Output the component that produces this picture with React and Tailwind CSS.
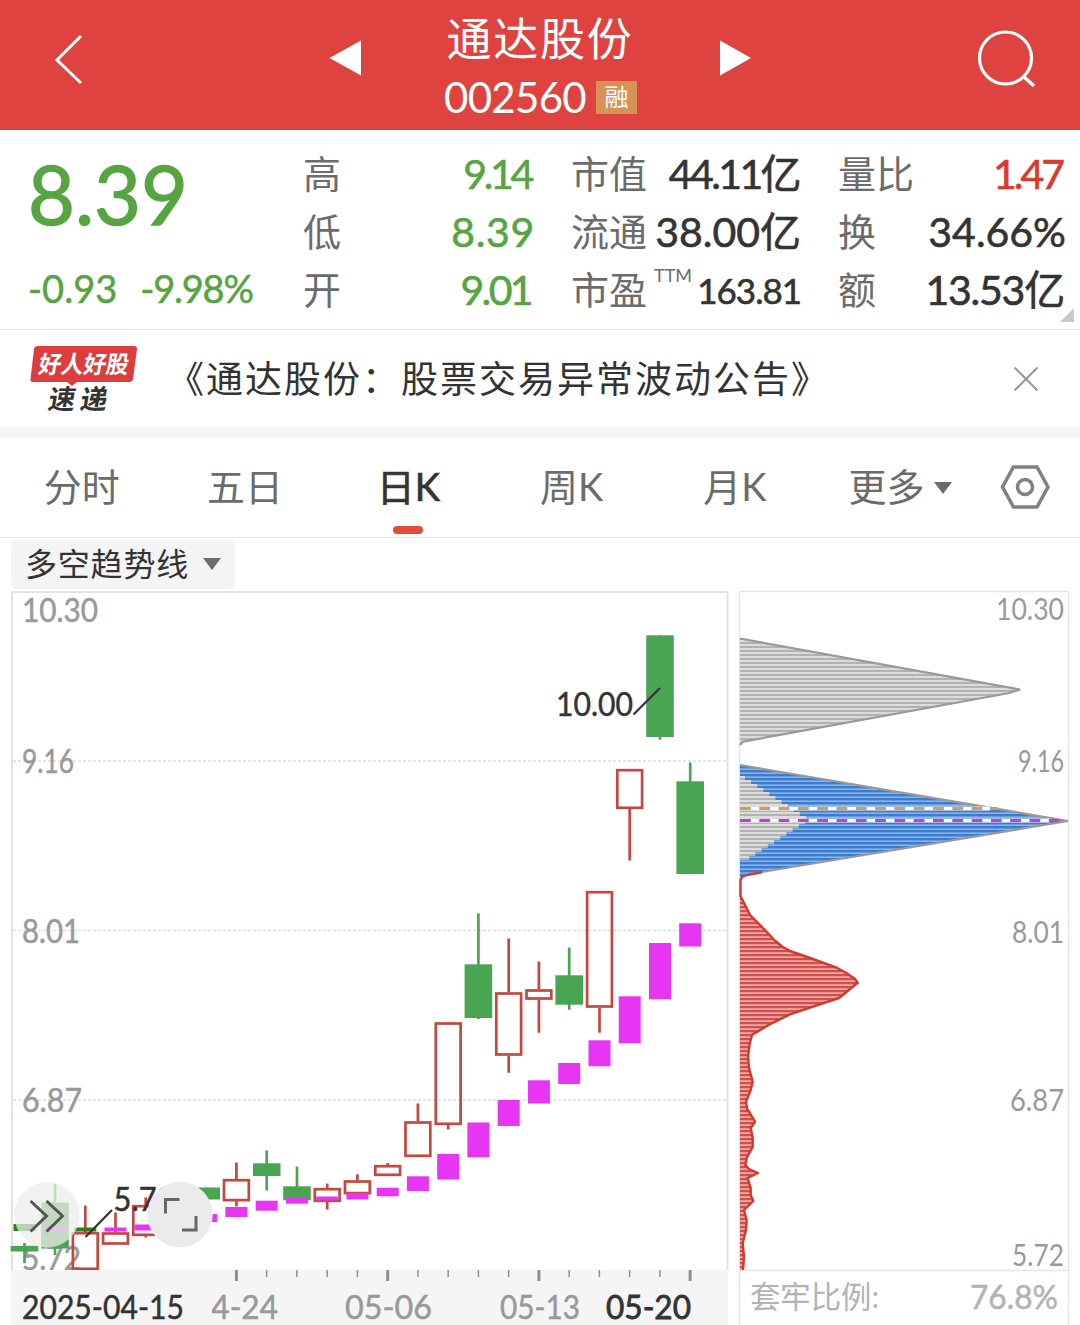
import { Fragment } from 'react';
import clsx from 'clsx';

const UP = '#c5473f';
const DOWN = '#4aa552';
const TREND = '#e835f3';
const TREND_DOWN = '#2f7d1c';

// x, body top, body bottom, wick top, wick bottom, direction
const candles = [
  [24.5, 1246, 1251.5, 1243, 1263, 'down'],
  [55, 1202.5, 1248.5, 1184, 1255, 'down'],
  [85.3, 1232, 1270, 1205.5, 1270, 'up'],
  [115.5, 1232.3, 1244.7, 1212.5, 1244.7, 'up'],
  [145.7, 1205, 1236, 1197.5, 1237.5, 'up'],
  [206.2, 1187.5, 1199.5, 1187.5, 1199.5, 'down'],
  [236.4, 1179, 1201.3, 1162.5, 1206.5, 'up'],
  [266.7, 1163.3, 1176, 1150.5, 1190.5, 'down'],
  [297, 1186.3, 1200.3, 1166.5, 1200.3, 'down'],
  [327.2, 1188, 1202, 1183.5, 1209.5, 'up'],
  [357.4, 1180.3, 1194.3, 1174.3, 1194.3, 'up'],
  [387.7, 1165, 1176, 1163, 1176, 'up'],
  [417.9, 1121.3, 1157, 1103.5, 1157, 'up'],
  [448.2, 1022.3, 1125, 1022.3, 1129.5, 'up'],
  [478.4, 964.3, 1018, 913.3, 1019, 'down'],
  [508.7, 992.3, 1055.7, 938.5, 1072.7, 'up'],
  [538.9, 989.3, 999.7, 961.5, 1032.7, 'up'],
  [569.2, 975.3, 1004.7, 947.5, 1009.7, 'down'],
  [599.5, 891, 1007.7, 891, 1032.7, 'up'],
  [629.7, 769, 809, 769, 860.5, 'up'],
  [660, 635.3, 737, 635.3, 739.7, 'down'],
  [690.2, 781.3, 874, 762.5, 874, 'down'],
];

// x, top, bottom
const trend = [
  [24.5, 1224, 1231, true],
  [55, 1227.5, 1231],
  [85.3, 1227.5, 1231.5, true],
  [115.5, 1227.5, 1231.5],
  [145.7, 1224.5, 1230.5],
  [206.2, 1214, 1222],
  [236.4, 1207, 1217],
  [266.7, 1200.7, 1210.7],
  [297, 1197.3, 1203.7],
  [327.2, 1196.5, 1200.5],
  [357.4, 1193, 1199.5],
  [387.7, 1187.7, 1196.3],
  [417.9, 1176.3, 1191],
  [448.2, 1154, 1179.5],
  [478.4, 1122.5, 1157.3],
  [508.7, 1100, 1126],
  [538.9, 1080.3, 1103.5],
  [569.2, 1063, 1084],
  [599.5, 1040.3, 1066.3],
  [629.7, 996.3, 1043.3],
  [660, 943, 999.3],
  [690.2, 923.3, 946.5],
];

const ticks = Array.from({ length: 16 }, (_, i) => 236.4 + i * 30.25);

const costLine = [
  [762, 872.3], [747, 875], [742, 877], [740.5, 880], [740.5, 896], [745, 905], [750, 915], [763, 928], [775, 940.7], [782, 946.5], [790, 951],
  [810, 958], [836.7, 967.7], [846, 972.7], [855, 979], [857.7, 982.7], [839, 998], [813, 1006.7], [790, 1014.3],
  [771.7, 1023.3], [752, 1034.7], [749.5, 1045], [748, 1056.7], [749, 1068], [752.7, 1081.7], [750.7, 1090],
  [746, 1101.7], [747, 1108.3], [755, 1121.7], [750.7, 1128], [752.7, 1138], [752.7, 1147], [746.7, 1157.7],
  [745.3, 1165], [749, 1169], [758, 1173], [747.5, 1178], [750.7, 1188], [750.7, 1195], [753.3, 1201], [744, 1210],
  [746.7, 1220], [746, 1230], [742.7, 1243], [744, 1257], [743, 1270],
].map((p) => p.join(',')).join(' ');

// stepped inner bars of the middle peak
const steps = [
  ...Array.from({ length: 11 }, (_, i) => [776 + i * 4, 5 + i * 6.1]),
  ...Array.from({ length: 10 }, (_, i) => [820 + i * 4, 65 - i * 6.2]),
];

const quotes = [
  [['高', '9.14', 'tracking-[-3.300px] mr-[3px] text-[#56a541]'], ['市值', '44.11亿', 'tracking-[-2.600px] mr-[2px]'], ['量比', '1.47', 'tracking-[-3px] mr-[3px] text-[#d93a2b]']],
  [['低', '8.39', 'tracking-[0.700px] mr-[-1px] text-[#56a541]'], ['流通', '38.00亿', ''], ['换', '34.66%', 'mr-[-1px]']],
  [['开', '9.01', 'tracking-[-2.600px] mr-[3px] text-[#56a541]'], ['市盈', '163.81', 'text-[35px] tracking-[-1px]'], ['额', '13.53亿', 'tracking-[-1.200px] mr-px']],
];

const tabs = ['分时', '五日', '日K', '周K', '月K'];

function Label({ x, y, w, size = 33, fill = '#999999', bold = 0.5, end = false, children }) {
  return (
    <text x={x} y={y} textLength={w} lengthAdjust="spacingAndGlyphs" fontSize={size} fill={fill} stroke={fill} strokeWidth={bold} textAnchor={end ? 'end' : 'start'}>
      {children}
    </text>
  );
}

function Header() {
  return (
    <header className="flex h-[130px] items-start justify-between bg-[#de4340] text-white">
      <svg className="ml-[50px] mt-[30px] h-[60px] w-[40px]" viewBox="50 30 40 60" fill="none" stroke="currentColor" strokeWidth="3">
        <path d="M81 36 57 60 81 83" />
      </svg>
      <div className="ml-[20px] flex items-start">
        <svg className="mt-[40px] h-[36px] w-[32px]" viewBox="329 40 32 36" fill="currentColor">
          <path d="M329.500 58 361 40.500V75.500Z" />
        </svg>
        <div className="flex w-[359px] flex-col items-center">
          <div className="mt-[7px] h-[64px] text-[45px] leading-[64px] tracking-[1.800px]">通达股份</div>
          <div className="flex h-[52px] items-center pl-px">
            <span className="text-[42px] leading-[52px] tracking-[-0.700px]">002560</span>
            <span className="ml-[10px] flex h-[33px] w-[41px] items-center justify-center bg-[#d89255] text-[24px]">融</span>
          </div>
        </div>
        <svg className="mt-[40px] h-[36px] w-[32px]" viewBox="720 40 32 36" fill="currentColor">
          <path d="M720 40.500 751 58 720 75.500Z" />
        </svg>
      </div>
      <svg className="mr-[40px] mt-[25px] h-[66px] w-[70px]" viewBox="970 25 70 66" fill="none" stroke="currentColor" strokeWidth="3.200">
        <circle cx="1005.500" cy="58" r="26" />
        <path d="M1023 76 1034 86" strokeWidth="3.600" />
      </svg>
    </header>
  );
}

function Quote() {
  return (
    <section className="relative flex h-[200px] border-b border-[#e9e9e9] text-[41px] text-[#333333]">
      <div className="w-[303px] shrink-0 pl-[28px] text-[#56a541]">
        <div className="mt-[14px] h-[100px] text-[81px] leading-[100px] [-webkit-text-stroke:1.300px]">8.39</div>
        <div className="mt-[19px] flex gap-[23px] text-[38px] leading-[50px] [-webkit-text-stroke:0.500px]">
          <span>-0.93</span>
          <span className="tracking-[-1.200px]">-9.98%</span>
        </div>
      </div>
      <div className="grid h-[189px] grid-cols-[231px_230px_227px] gap-x-[37px] pt-[15px]">
        {quotes.map((row, r) => (
          <Fragment key={r}>
            {row.map(([label, value, style]) => (
              <div key={label} className="flex h-[58px] items-start justify-between whitespace-nowrap">
                <span className="flex text-[38px] leading-[56px] text-[#6b6b6b]">
                  {label}
                  {label === '市盈' && <sup className="top-0 ml-[7px] mt-[-14px] text-[18px] leading-[56px]">TTM</sup>}
                </span>
                <span className={clsx('leading-[58px] [-webkit-text-stroke:0.600px]', style)}>{value}</span>
              </div>
            ))}
          </Fragment>
        ))}
      </div>
      <svg className="absolute right-[5px] top-[178px] h-[15px] w-[15px]" viewBox="0 0 15 15" fill="#c9c9c9">
        <path d="M14 0V14H0Z" />
      </svg>
    </section>
  );
}

function Notice() {
  return (
    <section className="flex h-[97px] items-center">
      <svg className="ml-[26px] h-[76px] w-[116px]" viewBox="26 340 116 76">
        <path d="M38 345H134Q137 345 137 348L133 378Q132.500 381 129 381H77L72 385 67 381H33Q30 381 30.500 378L34 348Q34.500 345 38 345Z" fill="#de3d3d" />
        <g transform="skewX(-10)" fontWeight="700">
          <text x="103" y="372" fontSize="24" textLength="90" lengthAdjust="spacingAndGlyphs" fill="#ffffff">好人好股</text>
          <text x="119" y="408.500" fontSize="27" textLength="59" fill="#333333">速递</text>
        </g>
      </svg>
      <p className="ml-[25px] flex-1 whitespace-nowrap pt-px text-[37px] tracking-[2px] text-[#333333]">《通达股份：股票交易异常波动公告》</p>
      <svg className="mr-[40px] h-[28px] w-[28px]" viewBox="0 0 28 28" fill="none" stroke="#9a9a9a" strokeWidth="2.200">
        <path d="M2.500 2.500 25.500 25.500M25.500 2.500 2.500 25.500" />
      </svg>
    </section>
  );
}

function Tabs() {
  return (
    <nav className="flex h-[100px] border-b border-[#e9e9e9] text-[38px] leading-[96px] text-[#6b6b6b]">
      {tabs.map((tab) => (
        <div key={tab} className="flex w-[163.300px] flex-col items-center">
          <span className={tab === '日K' ? 'h-[88px] text-[#333333] [-webkit-text-stroke:0.700px]' : 'h-[88px]'}>{tab}</span>
          {tab === '日K' && <i className="h-[8px] w-[30px] rounded-full bg-[#e24c3d]" />}
        </div>
      ))}
      <div className="ml-[32px] flex items-start">
        更多
        <svg className="ml-[9px] mt-[44px] h-[12px] w-[18px]" viewBox="0 0 18 12" fill="#6b6b6b">
          <path d="M0 0H18L9 12Z" />
        </svg>
      </div>
      <svg className="ml-[47px] mt-[26px] h-[46px] w-[52px]" viewBox="999 464 52 46" fill="none" stroke="#808080" strokeWidth="3.500">
        <path d="M1013.500 467H1037L1048 487 1037 507H1013.500L1002.500 487Z" />
        <circle cx="1025" cy="487" r="7.500" />
      </svg>
    </nav>
  );
}

function KLine() {
  return (
    <svg className="h-[734px] w-[717px] overflow-visible" viewBox="11 591 717 734">
      <path d="M12 1270V592H727.500V1270" fill="none" stroke="#e2e2e2" strokeWidth="2" />
      {[761, 930.5, 1100].map((y) => (
        <path key={y} d={`M13 ${y}H726`} stroke="#dddddd" strokeWidth="1.500" strokeDasharray="3 2" />
      ))}
      <Label x={22} y={621.5} w={76}>10.30</Label>
      <Label x={22} y={773} w={52}>9.16</Label>
      <Label x={22} y={942.5} w={58}>8.01</Label>
      <Label x={22} y={1111.7} w={60}>6.87</Label>
      <Label x={22} y={1270} w={59}>5.72</Label>
      {candles.map(([x, top, bottom, high, low, dir]) => (
        <g key={x} stroke={dir === 'up' ? UP : DOWN} strokeWidth="2.700">
          {dir === 'up' ? (
            <>
              <path d={`M${x} ${high}V${top}M${x} ${bottom}V${low}`} />
              <rect x={x - 12.4} y={top + 1.2} width="24.800" height={bottom - top - 2.4} fill="none" />
            </>
          ) : (
            <>
              <path d={`M${x} ${high}V${low}`} />
              <rect x={x - 13.8} y={top} width="27.600" height={bottom - top} fill={DOWN} stroke="none" />
            </>
          )}
        </g>
      ))}
      {trend.map(([x, top, bottom, down]) => (
        <rect key={x} x={x - 11} y={top} width="22" height={bottom - top} fill={down ? TREND_DOWN : TREND} />
      ))}
      <path d="M633.500 714.500 660 688M85.500 1237 112 1210" stroke="#333333" strokeWidth="2.200" />
      <Label x={556} y={715.7} w={77} fill="#333333">10.00</Label>
      <Label x={113.5} y={1210.5} w={61} fill="#333333">5.72</Label>

      <circle cx="47" cy="1215" r="32.700" fill="#ececea" fillOpacity="0.750" />
      <path d="M30.500 1201 46.500 1216 30.500 1231.500M46.500 1201 62.500 1216 46.500 1231.500" fill="none" stroke="#555555" strokeWidth="3" />
      <circle cx="180" cy="1214.500" r="32.700" fill="#ebebeb" />
      <path d="M165.500 1213.500V1199.500H179.500M196 1216V1230H182" fill="none" stroke="#666666" strokeWidth="3" />

      <rect x="11" y="1270" width="717" height="55" fill="#f5f5f5" />
      {ticks.map((x, i) => (
        <path key={x} d={`M${x} 1270v${i % 5 ? 7 : 11}`} stroke="#8f8f8f" strokeWidth={i % 5 ? 1.5 : 3} />
      ))}
      <Label x={193} y={1318.5} w={85}>04-24</Label>
      <rect x="11" y="1285" width="201" height="40" fill="#f5f5f5" />
      <Label x={22} y={1318.5} w={162} fill="#333333">2025-04-15</Label>
      <Label x={345} y={1318.5} w={87}>05-06</Label>
      <Label x={500} y={1318.5} w={80}>05-13</Label>
      <Label x={606} y={1318.5} w={85} fill="#333333" bold={0.8}>05-20</Label>
    </svg>
  );
}

function Chips() {
  return (
    <svg className="h-[734px] w-[331px] overflow-visible" viewBox="739 591 331 734">
      <defs>
        <pattern id="gray" width="4" height="4" y="2" patternUnits="userSpaceOnUse">
          <rect width="4" height="4" fill="#dcdcdc" />
          <rect width="4" height="2" fill="#b2b2b2" />
        </pattern>
        <pattern id="blue" width="4" height="4" y="2" patternUnits="userSpaceOnUse">
          <rect width="4" height="4" fill="#82b6ef" />
          <rect width="4" height="2.400" fill="#3f7acb" />
        </pattern>
        <pattern id="red" width="4" height="4" y="2" patternUnits="userSpaceOnUse">
          <rect width="4" height="4" fill="#f0a6a2" />
          <rect width="4" height="2.200" fill="#cb524c" />
        </pattern>
      </defs>
      <path d="M739.500 1325V591.500H1068.500V1325M739.500 1270.500H1068.500" fill="none" stroke="#e4e4e4" strokeWidth="1.300" />

      <path d="M740 638.500 1020 689.500 1008 693.300 743 741.700 740 745Z" fill="url(#gray)" />
      <path d="M740 638.500 1020 689.500 1008 693.300 743 741.700 740 745" fill="none" stroke="#999999" strokeWidth="2.200" />

      <path d="M740 765 1068 821 762 872 740 877Z" fill="url(#blue)" />
      {steps.map(([y, w]) => (
        <rect key={y} x="740" y={y} width={w} height="4" fill="url(#gray)" />
      ))}
      <path d="M740 765 1068 821 762 872" fill="none" stroke="#999999" strokeWidth="2.200" />
      <path d="M740 808.500H990M740 820.500H1050" stroke="#ffffff" strokeWidth="4" />
      <path d="M740 808.500H998" stroke="#d69c50" strokeWidth="3" strokeDasharray="10.800 8.500" />
      <path d="M740 820.500H1068" stroke="#c23fd0" strokeWidth="3" strokeDasharray="10.800 8.500" />

      <polygon points={`740,896 ${costLine.split(' ').slice(4).join(' ')} 740,1270`} fill="url(#red)" />
      <polyline points={costLine} fill="none" stroke="#d6372c" strokeWidth="2.400" strokeLinejoin="round" />

      <Label x={1064} y={619.5} w={68} size={30} bold={0} end>10.30</Label>
      <Label x={1064} y={772} w={46} size={30} bold={0} end>9.16</Label>
      <Label x={1064} y={942.5} w={52} size={30} bold={0} end>8.01</Label>
      <Label x={1064} y={1111} w={54} size={30} bold={0} end>6.87</Label>
      <Label x={1064} y={1265.5} w={52} size={30} bold={0} end>5.72</Label>
      <Label x={750} y={1308} w={129} size={31} bold={0} fill="#b3b3b3">套牢比例:</Label>
      <Label x={1058} y={1308.5} w={88} size={32} fill="#b3b3b3" end>76.8%</Label>
    </svg>
  );
}

export default function App() {
  return (
    <div className="h-[1325px] w-[1080px] overflow-hidden bg-white font-[Lato,'Noto_Sans_CJK_SC',sans-serif]">
      <Header />
      <Quote />
      <Notice />
      <div className="h-[11px] bg-[#f5f5f5]" />
      <Tabs />
      <div className="h-[53px] pl-[11px] pt-px">
        <button className="flex h-[50px] w-[224px] items-center rounded-md bg-[#f4f4f4] pl-[14px] text-[32px] tracking-[0.800px] text-[#333333]">
          多空趋势线
          <svg className="ml-[14px] h-[12px] w-[18px]" viewBox="0 0 18 12" fill="#6b6b6b">
            <path d="M0 0H18L9 12Z" />
          </svg>
        </button>
      </div>
      <main className="flex gap-[11px] pl-[11px]">
        <KLine />
        <Chips />
      </main>
    </div>
  );
}
